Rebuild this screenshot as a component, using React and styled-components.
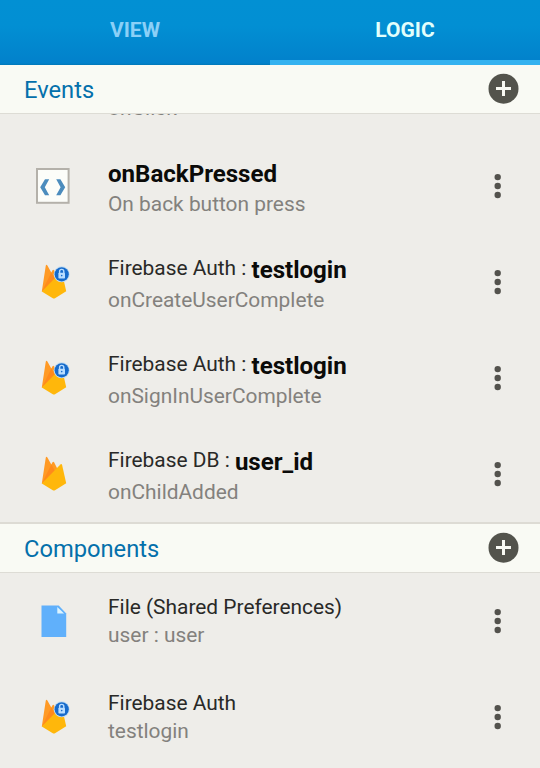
import React from "react";
import styled, { createGlobalStyle } from "styled-components";

const GlobalStyle = createGlobalStyle`
  * { box-sizing: border-box; }
  html, body { margin: 0; padding: 0; background: #eeede9; overflow: hidden; }
  body { font-family: Roboto, "Liberation Sans", sans-serif; }
`;

const Screen = styled.main`
  width: 540px;
  height: 768px;
  overflow: hidden;
  display: flex;
  flex-direction: column;
  background: #eeede9;
`;

const TabBar = styled.nav`
  flex: none;
  height: 65px;
  display: flex;
  background: linear-gradient(#0290d3 0%, #028fd3 40%, #0281cb 97%, #0078b8 100%);
`;

const Tab = styled.button`
  flex: 1;
  margin: 0;
  padding: 0 0 0 ${(p) => (p.$active ? 0 : 0)}px;
  border: 0;
  border-bottom: 5px solid ${(p) => (p.$active ? "#34b2f0" : "transparent")};
  background: none;
  font: 700 21px/60px Roboto, sans-serif;
  color: ${(p) => (p.$active ? "#e2fffc" : "#8bd0f7")};
`;

const Header = styled.header`
  flex: none;
  height: ${(p) => (p.$divided ? 51 : 49)}px;
  display: flex;
  align-items: center;
  justify-content: space-between;
  padding: 0 21px 0 24px;
  background: #f9faf4;
  border-top: ${(p) => (p.$divided ? "2px solid #dddbd4" : "0")};
  border-bottom: 1px solid #dddcd5;
`;

const Heading = styled.h2`
  margin: 0;
  padding-top: 1px;
  font-size: 23.7px;
  line-height: 28px;
  font-weight: 400;
  color: #0470ab;
`;

const List = styled.ul`
  flex: none;
  height: ${(p) => p.$height}px;
  margin: 0;
  padding: 0;
  overflow: hidden;
  list-style: none;
  display: flex;
  flex-direction: column;
  justify-content: ${(p) => (p.$fromEnd ? "flex-end" : "flex-start")};
`;

const Row = styled.li`
  flex: none;
  height: 96px;
  display: flex;
  align-items: center;
`;

/* The tail of the list item scrolled beneath the Events header. */
const ScrolledRow = styled.li`
  flex: none;
  height: 96px;
  padding: 52px 0 0 108px;
`;

const IconCell = styled.div`
  width: 108px;
  height: 96px;
  flex: none;
  svg { display: block; }
`;

const Labels = styled.div`
  flex: 1;
  height: 96px;
  padding-top: 20px;
  white-space: nowrap;
`;

const TitleLine = styled.div`
  height: ${(p) => (p.$plain ? 28 : 32)}px;
  display: flex;
  align-items: flex-start;
`;

const Title = styled.span`
  font-size: 20.9px;
  line-height: 28px;
  color: #292927;
  white-space: pre;
`;

const Name = styled.strong`
  font-size: 24.1px;
  line-height: 30px;
  padding-top: 1px;
  font-weight: 700;
  letter-spacing: -0.02px;
  color: #0b0b09;
`;

const Subtitle = styled.div`
  font-size: 20.9px;
  line-height: 28px;
  color: #83817d;
`;

const MenuButton = styled.button`
  width: 24px;
  height: 36px;
  margin: 0 30px 0 0;
  padding: 0;
  border: 0;
  background: none;
  svg { display: block; }
`;

const AddButton = styled.button`
  width: 31px;
  height: 31px;
  margin: 0 0 1px;
  padding: 0;
  border: 0;
  background: none;
  svg { display: block; }
`;

function CodeIcon() {
  return (
    <svg width="108" height="96" viewBox="0 0 108 96">
      <rect x="37" y="31" width="31.6" height="33.8" fill="#fcfdf9" stroke="#b4b1aa" strokeWidth="2" />
      <path d="M45 41.2h4.2l-4.4 8.1 4.4 8H45L40.2 49.3zM56.2 41.2h4.2l4.8 8.1-4.8 8h-4.2l4.4-8z" fill="#4b8cbd" />
    </svg>
  );
}

function FirebaseIcon({ locked }) {
  return (
    <svg width="108" height="96" viewBox="0 0 108 96">
      <path d="M41.8 57.5 45.8 31.6q.7-1.6 1.6 0l3.9 6.8 1.2-2.1q.8-1 1.6 0L58.5 45z" fill="#ff9a25" />
      <path d="M41.8 57.5 51.3 38.4l4.5 8z" fill="#ff8a1c" />
      <path d="M41.8 57.5 60.4 38.5q1.3-1 1.7.5L66.2 57.2 55 64.2q-1.1.6-2.2 0z" fill="#ffb70b" />
      {locked && (
        <>
          <circle cx="61.7" cy="40.3" r="8" fill="#c2dcf1" />
          <circle cx="61.7" cy="40.3" r="7.1" fill="#176bcb" />
          <path d="M59.6 39.5v-2a2.1 2.1 0 0 1 4.2 0v2" fill="none" stroke="#b9ddff" strokeWidth="1.4" />
          <rect x="58.4" y="38.8" width="6.6" height="5.6" rx=".7" fill="#b9ddff" />
          <circle cx="61.7" cy="41.6" r=".8" fill="#176bcb" />
        </>
      )}
    </svg>
  );
}

function FileIcon() {
  return (
    <svg width="108" height="96" viewBox="0 0 108 96">
      <path d="M41.5 32.5h17.2l7.5 8V64H41.5z" fill="#60b0fb" />
      <path d="M57.3 34v6.6h6.8z" fill="#ddf4ff" />
    </svg>
  );
}

const icons = {
  code: <CodeIcon />,
  auth: <FirebaseIcon locked />,
  firebase: <FirebaseIcon />,
  file: <FileIcon />,
};

function Item({ icon, title, name, subtitle }) {
  return (
    <Row>
      <IconCell>{icons[icon]}</IconCell>
      <Labels>
        <TitleLine $plain={!name}>
          {title && <Title>{title}</Title>}
          {name && <Name>{name}</Name>}
        </TitleLine>
        <Subtitle>{subtitle}</Subtitle>
      </Labels>
      <MenuButton aria-label="More options">
        <svg width="24" height="36" viewBox="0 0 24 36" fill="#53524d">
          <circle cx="11.7" cy="9.1" r="3.2" />
          <circle cx="11.7" cy="18" r="3.2" />
          <circle cx="11.7" cy="27" r="3.2" />
        </svg>
      </MenuButton>
    </Row>
  );
}

function SectionHeader({ title, divided }) {
  return (
    <Header $divided={divided}>
      <Heading>{title}</Heading>
      <AddButton aria-label={`Add ${title}`}>
        <svg width="31" height="31" viewBox="0 0 31 31">
          <circle cx="15.5" cy="15.7" r="15" fill="#53534c" />
          <path d="M15.5 8v15M8 15.5h15" stroke="#f9faf4" strokeWidth="3" />
        </svg>
      </AddButton>
    </Header>
  );
}

const events = [
  { icon: "code", name: "onBackPressed", subtitle: "On back button press" },
  { icon: "auth", title: "Firebase Auth : ", name: "testlogin", subtitle: "onCreateUserComplete" },
  { icon: "auth", title: "Firebase Auth : ", name: "testlogin", subtitle: "onSignInUserComplete" },
  { icon: "firebase", title: "Firebase DB : ", name: "user_id", subtitle: "onChildAdded" },
];

const components = [
  { icon: "file", title: "File (Shared Preferences)", subtitle: "user : user" },
  { icon: "auth", title: "Firebase Auth", subtitle: "testlogin" },
];

export default function App() {
  return (
    <Screen>
      <GlobalStyle />
      <TabBar>
        <Tab>VIEW</Tab>
        <Tab $active>LOGIC</Tab>
      </TabBar>
      <SectionHeader title="Events" />
      <List $height={408} $fromEnd>
        <ScrolledRow>
          <Subtitle>onClick</Subtitle>
        </ScrolledRow>
        {events.map((event) => (
          <Item key={event.subtitle} {...event} />
        ))}
      </List>
      <SectionHeader title="Components" divided />
      <List $height={195}>
        {components.map((component) => (
          <Item key={component.title} {...component} />
        ))}
      </List>
    </Screen>
  );
}
